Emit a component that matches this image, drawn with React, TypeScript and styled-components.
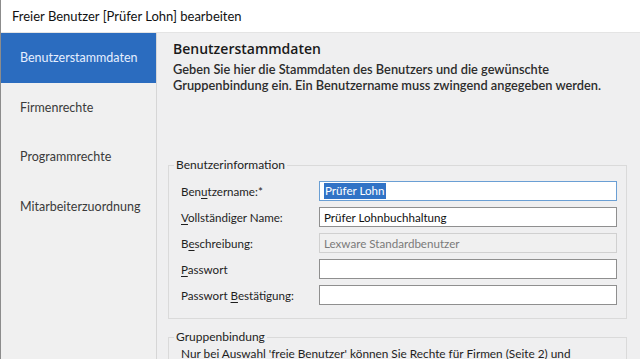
import React from "react";
import styled, { createGlobalStyle } from "styled-components";

const GlobalStyle = createGlobalStyle`
  html, body {
    margin: 0;
    padding: 0;
    height: 359px;
    overflow: hidden;
    background: #f0f0f0;
  }
  body {
    font-family: Lato, "Open Sans", sans-serif;
    color: #1e1e1e;
  }
`;

const navItems = [
  "Benutzerstammdaten",
  "Firmenrechte",
  "Programmrechte",
  "Mitarbeiterzuordnung",
];

type Field = {
  label: React.ReactNode;
  value?: string;
  focused?: boolean;
  disabled?: boolean;
};

const fields: Field[] = [
  { label: <>Ben<u>u</u>tzername:*</>, value: "Prüfer Lohn", focused: true },
  { label: <><u>V</u>ollständiger Name:</>, value: "Prüfer Lohnbuchhaltung" },
  { label: <>B<u>e</u>schreibung:</>, value: "Lexware Standardbenutzer", disabled: true },
  { label: <><u>P</u>asswort</> },
  { label: <>Passwort <u>B</u>estätigung:</> },
];

const App: React.FC = () => {
  return (
    <Window>
      <GlobalStyle />
      <TitleBar>Freier Benutzer [Prüfer Lohn] bearbeiten</TitleBar>
      <Body>
        <Sidebar>
          {navItems.map((item, i) => (
            <NavItem key={item} $active={i === 0}>
              {item}
            </NavItem>
          ))}
        </Sidebar>
        <Content>
          <Heading>Benutzerstammdaten</Heading>
          <Intro>
            Geben Sie hier die Stammdaten des Benutzers und die gewünschte
            <br />
            Gruppenbindung ein. Ein Benutzername muss zwingend angegeben werden.
          </Intro>

          <GroupBox $top={65}>
            <Legend>Benutzerinformation</Legend>
            <FieldGrid>
              {fields.map((f, i) => (
                <React.Fragment key={i}>
                  <FieldLabel>{f.label}</FieldLabel>
                  <InputBox $focused={f.focused} $disabled={f.disabled}>
                    {f.focused ? <Selected>{f.value}</Selected> : f.value}
                  </InputBox>
                </React.Fragment>
              ))}
            </FieldGrid>
          </GroupBox>

          <GroupBox $top={11}>
            <Legend>Gruppenbindung</Legend>
            <GroupText>
              Nur bei Auswahl 'freie Benutzer' können Sie Rechte für Firmen
              (Seite 2) und
            </GroupText>
          </GroupBox>
        </Content>
      </Body>
    </Window>
  );
};

const Window = styled.div`
  display: flex;
  flex-direction: column;
  width: 640px;
  height: 359px;
  border-left: 1px solid #8c8c8c;
  box-sizing: border-box;
  overflow: hidden;
`;

const TitleBar = styled.div`
  height: 33px;
  flex: none;
  display: flex;
  align-items: center;
  padding-left: 11px;
  padding-bottom: 1px;
  box-sizing: border-box;
  background: #ffffff;
  font-size: 13px;
  color: #111;
  border-bottom: 1px solid #e4e4e4;
`;

const Body = styled.div`
  flex: 1;
  display: flex;
  min-height: 0;
`;

const Sidebar = styled.div`
  width: 155px;
  flex: none;
  background: #f0f0f0;
  border-right: 1px solid #d6d6d6;
  display: flex;
  flex-direction: column;
`;

const NavItem = styled.div<{ $active?: boolean }>`
  height: 49.5px;
  display: flex;
  align-items: center;
  padding-left: 19px;
  font-size: 12.5px;
  color: ${({ $active }) => ($active ? "#e6efff" : "#3a3a3a")};
  background: ${({ $active }) => ($active ? "#2b6cbf" : "transparent")};
`;

const Content = styled.div`
  flex: 1;
  background: #efeff0;
  padding: 7px 13px 0 11px;
  min-width: 0;
`;

const Heading = styled.div`
  margin-left: 5px;
  font-family: "Open Sans", sans-serif;
  font-size: 14px;
  font-weight: 600;
  line-height: 17px;
  color: #1a1a1a;
`;

const Intro = styled.div`
  margin: 4px 0 0 5px;
  font-size: 12.8px;
  font-weight: 600;
  line-height: 16px;
  color: #2c2c2c;
  white-space: nowrap;
`;

const GroupBox = styled.fieldset<{ $top: number }>`
  margin: ${({ $top }) => $top}px 0 0;
  padding: 0;
  min-width: 0;
  border: 1px solid #dadada;
`;

const Legend = styled.legend`
  margin-left: 5px;
  padding: 0 2px;
  font-size: 12px;
  line-height: 14px;
  color: #222;
`;

const FieldGrid = styled.div`
  display: grid;
  grid-template-columns: 138px 1fr;
  row-gap: 6px;
  align-items: center;
  padding: 9px 9px 13px 12px;
`;

const FieldLabel = styled.div`
  font-size: 11.6px;
  color: #1e1e1e;

  u {
    text-underline-offset: 2px;
  }
`;

const InputBox = styled.div<{ $focused?: boolean; $disabled?: boolean }>`
  height: 20px;
  box-sizing: border-box;
  display: flex;
  align-items: center;
  padding-left: 4px;
  font-size: 11.6px;
  background: ${({ $disabled }) => ($disabled ? "#f0f0f0" : "#ffffff")};
  color: ${({ $disabled }) => ($disabled ? "#7a7a7a" : "#111")};
  border: 1px solid
    ${({ $focused, $disabled }) =>
      $focused ? "#6a9fd4" : $disabled ? "#d0d0d0" : "#8f8f8f"};
`;

const Selected = styled.span`
  background: #3173c6;
  color: #ffffff;
  line-height: 16px;
  padding: 0 1px;
`;

const GroupText = styled.div`
  padding: 2px 12px 0;
  font-size: 11.8px;
  color: #1e1e1e;
  white-space: nowrap;
`;

export default App;
